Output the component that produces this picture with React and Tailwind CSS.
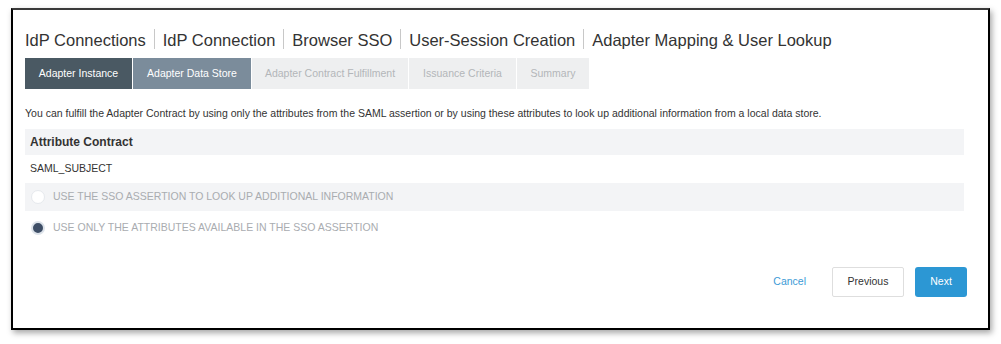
import React from "react";

const Sep = () => <span className="inline-block w-px h-[20px] bg-[#c8c8c8] mx-[8px] align-middle relative -top-[1px]" />;

export default function App() {
  const crumbs = ["IdP Connections", "IdP Connection", "Browser SSO", "User-Session Creation", "Adapter Mapping & User Lookup"];
  const tabs = [
    { label: "Adapter Instance", w: "w-[107px]", cls: "bg-[#4a5963] text-white" },
    { label: "Adapter Data Store", w: "w-[118px]", cls: "bg-[#7b8c9b] text-white" },
    { label: "Adapter Contract Fulfillment", w: "w-[156px]", cls: "bg-[#eeeff0] text-[#b3b6b9]" },
    { label: "Issuance Criteria", w: "w-[107px]", cls: "bg-[#eeeff0] text-[#b3b6b9]" },
    { label: "Summary", w: "w-[72px]", cls: "bg-[#eeeff0] text-[#b3b6b9]" },
  ];
  return (
    <div className="w-[1001px] h-[344px] bg-white pt-[8px] pl-[11px]" style={{ fontFamily: '"Liberation Sans", Arial, sans-serif' }}>
      <div className="w-[979px] h-[322px] border-2 border-black border-t-[#3a3a3a] bg-white shadow-[2px_3px_6px_rgba(0,0,0,0.35)]">
        <div className="pl-[12px] pr-[24px]">
          <div className="pt-[16px] h-[40px] text-[16.5px] leading-[24px] text-[#333] whitespace-nowrap">
            {crumbs.map((c, i) => (
              <React.Fragment key={c}>
                {i > 0 && <Sep />}
                <span className="align-middle">{c}</span>
              </React.Fragment>
            ))}
          </div>
          <div className="mt-[8px] flex gap-px h-[31px]">
            {tabs.map((t) => (
              <div key={t.label} className={`${t.w} ${t.cls} flex items-center justify-center text-[10.5px]`}>
                {t.label}
              </div>
            ))}
          </div>
          <div className="mt-[16px] text-[10.5px] leading-[16px] text-[#333] whitespace-nowrap">
            You can fulfill the Adapter Contract by using only the attributes from the SAML assertion or by using these attributes to look up additional information from a local data store.
          </div>
          <div className="mt-[8px] h-[26px] bg-[#f3f4f6] flex items-center pl-[5px] text-[12px] font-bold text-[#333]">
            Attribute Contract
          </div>
          <div className="h-[28px] flex items-center pl-[5px] text-[10.5px] text-[#333]">SAML_SUBJECT</div>
          <div className="h-[28px] bg-[#f3f4f6] flex items-center pl-[6px]">
            <span className="w-[14px] h-[14px] rounded-full bg-white border border-[#e6e9ed]" />
            <span className="ml-[8px] text-[10.5px] text-[#a9acb0]">USE THE SSO ASSERTION TO LOOK UP ADDITIONAL INFORMATION</span>
          </div>
          <div className="mt-[3px] h-[28px] flex items-center pl-[6px]">
            <span className="w-[14px] h-[14px] rounded-full bg-[#3e4e66] border-2 border-[#dde3ea]" />
            <span className="ml-[8px] text-[10.5px] text-[#a9acb0]">USE ONLY THE ATTRIBUTES AVAILABLE IN THE SSO ASSERTION</span>
          </div>
        </div>
        <div className="mt-[25px] pr-[21px] flex justify-end items-center">
          <span className="text-[10.5px] text-[#3c9bd6]">Cancel</span>
          <div className="ml-[26px] w-[72px] h-[30px] border border-[#dedede] rounded-[2px] flex items-center justify-center text-[10.5px] text-[#333]">Previous</div>
          <div className="ml-[11px] w-[52px] h-[30px] bg-[#2c97d4] rounded-[3px] flex items-center justify-center text-[10.5px] text-white">Next</div>
        </div>
      </div>
    </div>
  );
}
